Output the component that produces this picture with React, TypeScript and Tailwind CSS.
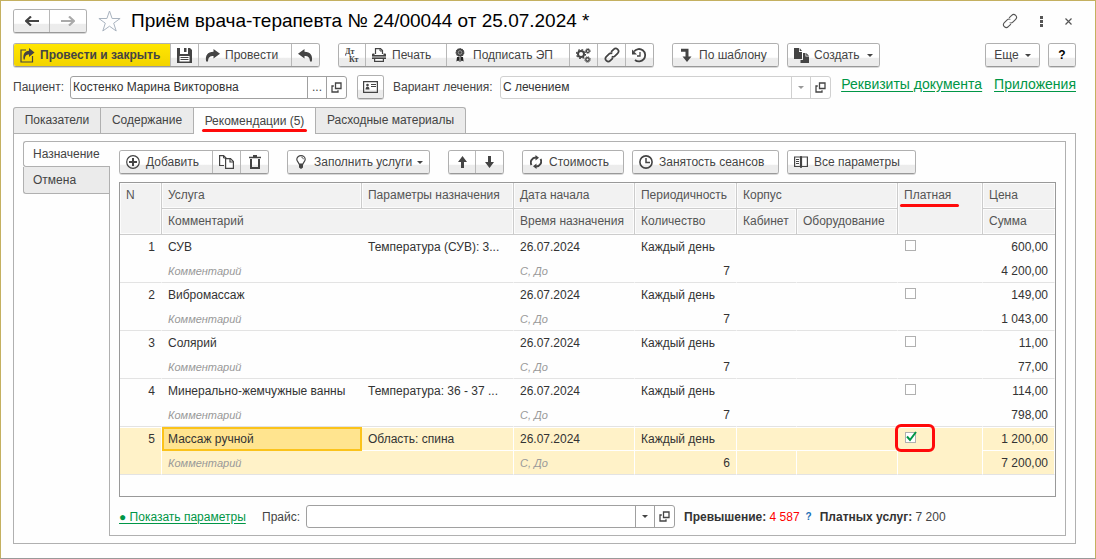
import type { ReactNode } from "react";

type Service = {
  name: string;
  params: string;
  date: string;
  count: number;
  paid: boolean;
  price: string;
  total: string;
};

const services: Service[] = [
  { name: "СУВ", params: "Температура (СУВ): 3...", date: "26.07.2024", count: 7, paid: false, price: "600,00", total: "4 200,00" },
  { name: "Вибромассаж", params: "", date: "26.07.2024", count: 7, paid: false, price: "149,00", total: "1 043,00" },
  { name: "Солярий", params: "", date: "26.07.2024", count: 7, paid: false, price: "11,00", total: "77,00" },
  { name: "Минерально-жемчужные ванны", params: "Температура: 36 - 37 ...", date: "26.07.2024", count: 7, paid: false, price: "114,00", total: "798,00" },
  { name: "Массаж ручной", params: "Область: спина", date: "26.07.2024", count: 6, paid: true, price: "1 200,00", total: "7 200,00" },
];

const selectedIndex = 4;

const face = "bg-[linear-gradient(#ffffff_60%,#ececec_66%,#ececec)]";
const groupBox = "flex h-6 shrink-0 overflow-hidden rounded-[3px] border border-[#b0b0b0] border-b-[#999999] shadow-[0_1px_0_#d8d8d8]";

function Group({ children, className = "" }: { children: ReactNode; className?: string }) {
  return <div className={`${groupBox} divide-x divide-[#b8b8b8] ${className}`}>{children}</div>;
}

function IconBtn({ children, label, className = "" }: { children: ReactNode; label: string; className?: string }) {
  return (
    <button type="button" aria-label={label} className={`flex items-center justify-center ${face} ${className}`}>
      {children}
    </button>
  );
}

function Btn({ icon, children, menu = false, className = "" }: { icon: ReactNode; children: ReactNode; menu?: boolean; className?: string }) {
  return (
    <button type="button" className={`flex items-center gap-[5px] pl-[5px] whitespace-nowrap ${face} ${className}`}>
      <span className="flex w-4 shrink-0 justify-center">{icon}</span>
      {children}
      {menu && (
        <span className="mr-1.5 ml-auto">
          <Caret />
        </span>
      )}
    </button>
  );
}

function Svg({ children, w = 16, h = 16 }: { children: ReactNode; w?: number; h?: number }) {
  return (
    <svg width={w} height={h} viewBox={`0 0 ${w} ${h}`} fill="none" stroke="currentColor" aria-hidden="true" className="shrink-0">
      {children}
    </svg>
  );
}

const Caret = () => (
  <Svg w={6} h={3}>
    <path d="M0 0h6L3 3z" fill="currentColor" stroke="none" />
  </Svg>
);

const OpenIcon = () => (
  <Svg w={11} h={11}>
    <path d="M4.5 1h5.500v5.500h-5.500z" strokeWidth="1.300" />
    <path d="M2.800 4H1v6h6V8.300" strokeWidth="1.300" />
  </Svg>
);

const ArrowIcon = ({ flip = false }: { flip?: boolean }) => (
  <Svg w={14} h={10}>
    <path d={flip ? "M0 5h12" : "M14 5H2"} strokeWidth="2" />
    <path d={flip ? "M8 .5 13 5 8 9.500" : "M6 .5 1 5l5 4.500"} strokeWidth="2.200" />
  </Svg>
);

const ForwardIcon = () => (
  <Svg w={15} h={13}>
    <path d="M8.500 0 15 4.800 8.500 9.600V7C5 7 3.200 8.200 3 12.500H1.200C0 6.500 2.500 2.800 8.500 2.700z" fill="currentColor" stroke="none" />
  </Svg>
);

const BackIcon = () => (
  <Svg w={15} h={13}>
    <path d="M6.500 0 0 4.800l6.500 4.800V7c3.500 0 5.300 1.200 5.500 5.500h1.800C15 6.500 12.500 2.800 6.500 2.700z" fill="currentColor" stroke="none" />
  </Svg>
);

const PostCloseIcon = () => (
  <Svg w={15} h={15}>
    <path d="M6 2H1v12h11.500V8" strokeWidth="1.200" />
    <path d="M9 0l5.500 4.500L9 9V6.500C6.500 6.500 5 7.500 4.800 11.500H3.600C2.600 6.500 4.800 2.800 9 2.700z" fill="currentColor" stroke="none" />
  </Svg>
);

const SaveIcon = () => (
  <Svg w={15} h={15}>
    <path d="M0 0h3v6h8V0h2l2 2v13H0z" fill="currentColor" stroke="none" />
    <path d="M7 0h2.500v4H7z" fill="currentColor" stroke="none" />
    <path d="M2.500 8h10v5.500h-10z" fill="#fff" stroke="none" />
    <path d="M3.500 9.500h8M3.500 11.500h8" />
  </Svg>
);

const DtKtIcon = () => (
  <svg width="15" height="15" viewBox="0 0 15 15" aria-hidden="true" className="shrink-0 fill-current font-['Liberation_Serif',serif] font-bold">
    <text x="0" y="6" fontSize="8">Дт</text>
    <text x="4" y="14" fontSize="8">Кт</text>
  </svg>
);

const PrintIcon = () => (
  <Svg w={14} h={14}>
    <path d="M3.500 6V.6h5l2 2V6" strokeWidth="1.200" />
    <path d="M8 .6V3h2.500" />
    <path d="M1 5.500h1.500V7h9V5.500H13a1 1 0 0 1 1 1V11H0V6.500a1 1 0 0 1 1-1z" fill="currentColor" stroke="none" />
    <path d="M0 9h14" stroke="#fff" strokeWidth=".8" />
    <path d="M2.600 10.500h8.800v2.900H2.600z" fill="#fff" strokeWidth="1.200" />
  </Svg>
);

const MedalIcon = () => (
  <Svg w={10} h={14}>
    <circle cx="5" cy="4.500" r="3.800" fill="currentColor" strokeWidth="1.200" strokeDasharray="1.500 .6" />
    <circle cx="5" cy="4.500" r="1.800" stroke="#aaa" strokeWidth=".8" />
    <path d="M2 9l-.6 4.500L3.200 12.500 4.600 14V9zM8 9l.6 4.500-1.800-1L5.400 14V9z" fill="#222" stroke="none" />
  </Svg>
);

const GearsIcon = () => (
  <Svg w={15} h={15}>
    <circle cx="5" cy="6" r="3" strokeWidth="2" />
    <circle cx="5" cy="6" r="4.500" strokeWidth="1.200" strokeDasharray="1.700 1.830" />
    <circle cx="11.800" cy="3" r="1.500" strokeWidth="1.300" />
    <circle cx="11.800" cy="3" r="2.500" strokeWidth=".8" strokeDasharray="1 1" />
    <circle cx="11.500" cy="11.500" r="1.700" strokeWidth="1.400" />
    <circle cx="11.500" cy="11.500" r="2.800" strokeWidth="1" strokeDasharray="1.100 1.100" />
  </Svg>
);

const ChainIcon = ({ thin = false }: { thin?: boolean }) => (
  <Svg w={16} h={16}>
    <g transform="rotate(-45 8 8)" strokeWidth={thin ? 1.1 : 1.7}>
      <path d="M6.500 10.800H2.800a2.800 2.800 0 0 1 0-5.600h4a2.800 2.800 0 0 1 2.600 1.900" />
      <path d="M9.500 5.200h3.700a2.800 2.800 0 0 1 0 5.600H9.200a2.800 2.800 0 0 1-2.600-1.900" />
    </g>
  </Svg>
);

const HistoryIcon = () => (
  <Svg w={15} h={15}>
    <path d="M2 3.500A6.200 6.200 0 1 1 3 12" strokeWidth="1.800" />
    <path d="M0 1.500v5h5z" fill="currentColor" stroke="none" />
    <path d="M8 4v4H5" strokeWidth="1.300" />
  </Svg>
);

const TemplateIcon = () => (
  <Svg w={12} h={14}>
    <path d="M1 2.200h6V10" strokeWidth="3" />
    <path d="M2.500 8.500h9L7 14z" fill="currentColor" stroke="none" />
  </Svg>
);

const CreateIcon = () => (
  <Svg w={15} h={15}>
    <path d="M0 0h5v4h3v7H0z" fill="currentColor" stroke="none" />
    <path d="M5.700 0 8 3H5.700z" fill="currentColor" stroke="none" />
    <path d="M9 5h2.500v3.500H15V15H6.500v-3H9z" fill="currentColor" stroke="none" />
    <path d="M12.200 5 15 7.800h-2.800z" fill="currentColor" stroke="none" />
  </Svg>
);

const CardIcon = () => (
  <Svg w={15} h={12}>
    <path d="M.6.600h13.800v10.800H.6z" strokeWidth="1.200" />
    <circle cx="4.500" cy="4" r="1.300" fill="currentColor" stroke="none" />
    <path d="M2.500 8.500c0-4 4-4 4 0z" fill="currentColor" stroke="none" />
    <path d="M8 3.500h5M8 5.500h5" />
  </Svg>
);

const PlusIcon = () => (
  <Svg w={14} h={14}>
    <circle cx="7" cy="7" r="6.300" strokeWidth="1.200" />
    <path d="M7 3v8M3 7h8" strokeWidth="2" />
  </Svg>
);

const CopyIcon = () => (
  <Svg w={15} h={14}>
    <path d="M5 10.500H.6V.6h4L7 3v2" strokeWidth="1.200" />
    <path d="M4.500.600V3H7" />
    <path d="M6.600 3.600h4.900L14.400 6.500v6.900H6.600z" fill="#fff" strokeWidth="1.200" />
    <path d="M11 3.600V7h3.400" strokeWidth="1.200" />
  </Svg>
);

const TrashIcon = () => (
  <Svg w={12} h={14}>
    <path d="M0 2.500h12M4 .8h4" strokeWidth="1.700" />
    <path d="M2 4v9h8V4" strokeWidth="2" />
  </Svg>
);

const BulbIcon = () => (
  <Svg w={10} h={14}>
    <path d="M3 9C2.800 7.500.800 6.500.800 4.300a4.200 3.700 0 0 1 8.400 0C9.200 6.500 7.200 7.500 7 9z" strokeWidth="1.200" />
    <path d="M5.500 2.300c1.200.2 1.700.9 1.800 1.900" />
    <path d="M3 9h4v3.500L5 14l-2-1.500z" fill="currentColor" stroke="none" />
  </Svg>
);

const VArrowIcon = ({ down = false }: { down?: boolean }) => (
  <Svg w={9} h={12}>
    <path d={down ? "M3 0h3v6h3l-4.500 6L0 6h3z" : "M3 12h3V6h3L4.500 0 0 6h3z"} fill="currentColor" stroke="none" />
  </Svg>
);

const RefreshIcon = () => (
  <Svg w={12} h={14}>
    <path d="M1.500 10A5 5 0 0 1 6 2.500M10.500 4A5 5 0 0 1 6 11.500" strokeWidth="1.900" />
    <path d="M5.500 0v5.500L9 2.700zM6.500 8.500V14L3 11.300z" fill="currentColor" stroke="none" />
  </Svg>
);

const ClockIcon = () => (
  <Svg w={14} h={14}>
    <circle cx="7" cy="7" r="6.100" strokeWidth="1.600" />
    <path d="M7 3v4.500h4" strokeWidth="1.500" />
  </Svg>
);

const BookIcon = () => (
  <Svg w={14} h={12}>
    <path d="M.6 1h5.900v9.500H.6zM7.500 1h5.900v9.500H7.500z" strokeWidth="1.200" />
    <path d="M2 3.500h3M2 5.500h3M2 7.500h3" />
    <path d="M7 0v12" strokeWidth="1.600" />
  </Svg>
);

const StarIcon = () => (
  <Svg w={23} h={22}>
    <path d="M11.500 1l2.600 7.500h8l-6.400 4.700 2.500 7.800-6.700-4.800L4.800 21l2.500-7.800L.9 8.500h8z" stroke="#a9b3bf" />
  </Svg>
);

const tabs = [
  { title: "Показатели", width: "w-[88px]" },
  { title: "Содержание", width: "w-[93px]" },
  { title: "Рекомендации (5)", width: "w-[122px]" },
  { title: "Расходные материалы", width: "w-[150px]" },
];

function Tabs() {
  return (
    <div role="tablist" className="flex">
      {tabs.map(({ title, width }, i) => {
        const active = i === 2;
        return (
          <button
            key={title}
            type="button"
            role="tab"
            aria-selected={active}
            className={`relative border-t border-r border-[#b0b0b0] pb-px whitespace-nowrap first:rounded-tl-[3px] first:border-l last:rounded-tr-[3px] ${width} ${active ? "z-10 -mb-px h-[27px] bg-[#fefefe]" : "h-[26px] bg-[#ebebeb]"}`}
          >
            {title}
            {active && <span className="absolute right-2 bottom-0.5 left-2 h-[3px] rounded-full bg-[#ff0a0a]" />}
          </button>
        );
      })}
    </div>
  );
}

const th = "border-r border-b border-[#cccccc] bg-[#f2f2f2] px-1.5 text-left align-top font-normal leading-[25px] whitespace-nowrap shadow-[inset_0_0_0_1px_#fcfcfc] last:border-r-0";

function ServiceRows({ service, index }: { service: Service; index: number }) {
  const selected = index === selectedIndex;
  const cell = "h-6 border-r border-b px-1.5 py-0 whitespace-nowrap";
  const fill = selected ? "bg-[#fff2c8]" : "";
  const side = selected ? "border-r-white" : "border-r-transparent";
  const edge = selected ? "border-b-white" : "border-b-transparent";
  const glow = selected ? "shadow-[inset_0_1px_0_#ffffff]" : "";
  const top = `${cell} ${side} ${edge} ${glow} leading-[22px]`;
  const bottom = `${cell} ${side} ${fill} border-b-[#e3e3e3]`;
  const hint = "text-[11px] leading-[22px] text-[#999999] italic";

  return (
    <>
      <tr>
        <td rowSpan={2} className={`${bottom} ${glow} text-right align-top leading-6`}>{index + 1}</td>
        <td className={`${top} ${selected ? "bg-[#ffe48f] outline-2 -outline-offset-2 outline-[#fbc31b]" : ""}`}>{service.name}</td>
        <td className={`${top} ${fill}`}>{service.params}</td>
        <td className={`${top} ${fill}`}>{service.date}</td>
        <td className={`${top} ${fill}`}>Каждый день</td>
        <td colSpan={2} className={`${cell} ${edge} ${glow} ${fill} border-r-transparent`} />
        <td rowSpan={2} className={`${bottom} ${glow} relative align-top`}>
          <label className="flex pt-[5px]">
            <input
              type="checkbox"
              defaultChecked={service.paid}
              aria-label={`Платная: ${service.name}`}
              className="peer ml-px size-[11px] appearance-none border border-[#b0b0b0] bg-white"
            />
            <svg width="11" height="11" viewBox="0 0 11 11" className="-ml-[10px] hidden overflow-visible peer-checked:block" aria-hidden="true">
              <path d="M1 4.500 4 8 10 0" fill="none" stroke="#009646" strokeWidth="2" />
            </svg>
          </label>
          {service.paid && <span className="pointer-events-none absolute -top-[3px] -left-[3px] z-10 h-7 w-10 rounded-md border-3 border-[#ff0a0a]" />}
        </td>
        <td className={`${top} ${fill} text-right`}>{service.price}</td>
      </tr>
      <tr>
        <td colSpan={2} className={`${bottom} ${hint}`}>Комментарий</td>
        <td className={`${bottom} ${hint}`}>С, До</td>
        <td className={`${bottom} text-right leading-[22px]`}>{service.count}</td>
        <td className={bottom} />
        <td className={bottom} />
        <td className={`${bottom} text-right leading-[22px]`}>{service.total}</td>
      </tr>
    </>
  );
}

function ServicesTable() {
  return (
    <div className="mt-2 h-[315px] overflow-hidden border border-[#999999]">
      <table className="w-full table-fixed border-separate border-spacing-0">
        <colgroup>
          <col className="w-[42px]" />
          <col />
          <col className="w-[152px]" />
          <col className="w-[121px]" />
          <col className="w-[102px]" />
          <col className="w-[60px]" />
          <col className="w-[101px]" />
          <col className="w-[85px]" />
          <col className="w-[72px]" />
        </colgroup>
        <thead className="text-[#555555]">
          <tr>
            <th rowSpan={2} className={th}>N</th>
            <th className={th}>Услуга</th>
            <th className={th}>Параметры назначения</th>
            <th className={th}>Дата начала</th>
            <th className={th}>Периодичность</th>
            <th colSpan={2} className={th}>Корпус</th>
            <th rowSpan={2} className={th}>
              <span className="relative block">
                Платная
                <span className="absolute bottom-px -left-1 h-[3px] w-[59px] rounded-full bg-[#ff0a0a]" />
              </span>
            </th>
            <th className={th}>Цена</th>
          </tr>
          <tr>
            <th colSpan={2} className={th}>Комментарий</th>
            <th className={th}>Время назначения</th>
            <th className={th}>Количество</th>
            <th className={th}>Кабинет</th>
            <th className={th}>Оборудование</th>
            <th className={th}>Сумма</th>
          </tr>
        </thead>
        <tbody className="text-[#333333]">
          {services.map((service, index) => (
            <ServiceRows key={service.name} service={service} index={index} />
          ))}
        </tbody>
      </table>
    </div>
  );
}

export default function App() {
  return (
    <div className="min-h-[559px] border border-[#c4b060] border-b-[#999999] bg-[#fefefe] pt-2 pr-[19px] pb-3 pl-3 font-['Liberation_Sans',Arial,sans-serif] text-[12px] leading-4 text-[#444444]">
      <header className="flex items-center">
        <Group>
          <IconBtn label="Назад" className="w-9"><ArrowIcon /></IconBtn>
          <IconBtn label="Вперёд" className="w-9 text-[#aaaaaa]"><ArrowIcon flip /></IconBtn>
        </Group>
        <button type="button" aria-label="В избранное" className="ml-[11px]">
          <StarIcon />
        </button>
        <h1 className="ml-2.5 text-[19px] leading-6 text-black">Приём врача-терапевта № 24/00044 от 25.07.2024 *</h1>
        <div className="ml-auto flex items-center gap-[22px] text-[#555555]">
          <button type="button" aria-label="Скопировать ссылку">
            <ChainIcon thin />
          </button>
          <button type="button" aria-label="Меню">
            <Svg w={3} h={11}>
              <path d="M0 0h3v3H0zM0 4h3v3H0zM0 8h3v3H0z" fill="currentColor" stroke="none" />
            </Svg>
          </button>
          <button type="button" aria-label="Закрыть" className="mr-1">
            <Svg w={7} h={7}>
              <path d="M.5.5l6 6M6.500.500l-6 6" strokeWidth="1.200" />
            </Svg>
          </button>
        </div>
      </header>

      <div className="mt-2.5 flex">
        <Group className="mr-[18px]">
          <button type="button" className="flex w-[157px] items-center gap-[5px] bg-[linear-gradient(#ffe600,#f3d400)] pl-1.5 font-bold whitespace-nowrap">
            <PostCloseIcon />
            Провести и закрыть
          </button>
          <IconBtn label="Записать" className="w-7"><SaveIcon /></IconBtn>
          <Btn icon={<ForwardIcon />} className="w-[93px]">Провести</Btn>
          <IconBtn label="Отменить" className="w-[27px]"><BackIcon /></IconBtn>
        </Group>
        <Group className="mr-[18px]">
          <IconBtn label="Движения" className="w-[27px]"><DtKtIcon /></IconBtn>
          <Btn icon={<PrintIcon />} className="w-[81px]">Печать</Btn>
          <Btn icon={<MedalIcon />} className="w-[123px]">Подписать ЭП</Btn>
          <IconBtn label="Настройки" className="w-7"><GearsIcon /></IconBtn>
          <IconBtn label="Связи" className="w-7"><ChainIcon /></IconBtn>
          <IconBtn label="История" className="w-[27px]"><HistoryIcon /></IconBtn>
        </Group>
        <Group className="mr-2">
          <Btn icon={<TemplateIcon />} className="w-[105px]">По шаблону</Btn>
        </Group>
        <Group>
          <Btn icon={<CreateIcon />} menu className="w-[91px]">Создать</Btn>
        </Group>
        <Group className="ml-auto">
          <button type="button" className={`flex w-[53px] items-center justify-center gap-1.5 ${face}`}>
            Еще
            <Caret />
          </button>
        </Group>
        <Group className="ml-2">
          <button type="button" aria-label="Справка" className={`w-[26px] font-bold text-black ${face}`}>?</button>
        </Group>
      </div>

      <div className="mt-2 flex items-center">
        <label htmlFor="patient" className="w-[57px]">Пациент:</label>
        <div className="flex h-[23px] w-[277px] divide-x divide-[#a0a0a0] overflow-hidden rounded-[3px] border border-[#a0a0a0] bg-white">
          <input id="patient" defaultValue="Костенко Марина Викторовна" className="min-w-0 flex-1 px-0.5 text-[#333333] outline-none" />
          <button type="button" className="w-[19px]">...</button>
          <button type="button" aria-label="Открыть пациента" className="flex w-[19px] items-center justify-center">
            <OpenIcon />
          </button>
        </div>
        <Group className="ml-2.5">
          <IconBtn label="Карта пациента" className="w-[25px]"><CardIcon /></IconBtn>
        </Group>
        <label htmlFor="variant" className="ml-[9px] w-[107px] whitespace-nowrap">Вариант лечения:</label>
        <div className="flex h-[23px] flex-1 divide-x divide-[#d0d0d0] overflow-hidden rounded-[3px] border border-[#d0d0d0] bg-white">
          <select id="variant" className="min-w-0 flex-1 appearance-none px-0.5 text-[#333333] outline-none">
            <option>С лечением</option>
          </select>
          <span className="flex w-[19px] items-center justify-center text-[#999999]">
            <Caret />
          </span>
          <button type="button" aria-label="Открыть вариант" className="flex w-[19px] items-center justify-center">
            <OpenIcon />
          </button>
        </div>
        <nav className="ml-2.5 flex gap-3 pb-[7px] text-[14px] whitespace-nowrap text-[#009646] underline underline-offset-2">
          <a href="#requisites">Реквизиты документа</a>
          <a href="#attachments">Приложения</a>
        </nav>
      </div>

      <div className="mt-2">
        <Tabs />
        <div className="flex border border-[#b0b0b0] py-[7px] pr-[9px] pl-[9px]">
          <div role="tablist" aria-orientation="vertical" className="flex w-[86px] shrink-0 flex-col">
            <button type="button" role="tab" aria-selected="true" className="relative z-10 -mr-px h-[26px] rounded-l-[3px] border border-r-0 border-[#b0b0b0] bg-[#fefefe] pl-[9px] text-left">
              Назначение
            </button>
            <button type="button" role="tab" aria-selected="false" className="h-[27px] rounded-bl-[3px] border border-t-0 border-r-0 border-[#b0b0b0] bg-[#ebebeb] pl-[9px] text-left">
              Отмена
            </button>
          </div>

          <main className="min-w-0 flex-1 border border-[#b0b0b0] px-[9px] pt-2 pb-[7px]">
            <div className="flex">
              <Group className="mr-[18px]">
                <Btn icon={<PlusIcon />} className="w-[93px]">Добавить</Btn>
                <IconBtn label="Скопировать" className="w-7"><CopyIcon /></IconBtn>
                <IconBtn label="Удалить" className="w-[27px]"><TrashIcon /></IconBtn>
              </Group>
              <Group className="mr-[18px]">
                <Btn icon={<BulbIcon />} menu className="w-[141px]">Заполнить услуги</Btn>
              </Group>
              <Group className="mr-[18px]">
                <IconBtn label="Вверх" className="w-[27px]"><VArrowIcon /></IconBtn>
                <IconBtn label="Вниз" className="w-[27px]"><VArrowIcon down /></IconBtn>
              </Group>
              <Group className="mr-2">
                <Btn icon={<RefreshIcon />} className="w-[100px]">Стоимость</Btn>
              </Group>
              <Group className="mr-2">
                <Btn icon={<ClockIcon />} className="w-[145px]">Занятость сеансов</Btn>
              </Group>
              <Group>
                <Btn icon={<BookIcon />} className="w-[127px]">Все параметры</Btn>
              </Group>
            </div>

            <ServicesTable />

            <div className="mt-2 flex items-center whitespace-nowrap">
              <div className="w-[133px]">
                <a href="#params" className="text-[#009646] underline underline-offset-2">● Показать параметры</a>
              </div>
              <label htmlFor="price" className="ml-2.5 w-[44px]">Прайс:</label>
              <div className="flex h-[23px] w-[369px] divide-x divide-[#a0a0a0] overflow-hidden rounded-[3px] border border-[#a0a0a0] bg-white">
                <select id="price" className="min-w-0 flex-1 appearance-none px-0.5 outline-none">
                  <option />
                </select>
                <span className="flex w-[19px] items-center justify-center">
                  <Caret />
                </span>
                <button type="button" aria-label="Открыть прайс" className="flex w-[19px] items-center justify-center">
                  <OpenIcon />
                </button>
              </div>
              <p className="ml-[9px]">
                <b className="text-[#333333]">Превышение:</b> <span className="text-[#ff0000]">4 587</span>
              </p>
              <button type="button" aria-label="Подсказка" className="ml-1.5 text-[10px] font-bold text-[#1a6fb5]">?</button>
              <p className="ml-2">
                <b className="text-[#333333]">Платных услуг:</b> 7 200
              </p>
            </div>
          </main>
        </div>
      </div>
    </div>
  );
}
